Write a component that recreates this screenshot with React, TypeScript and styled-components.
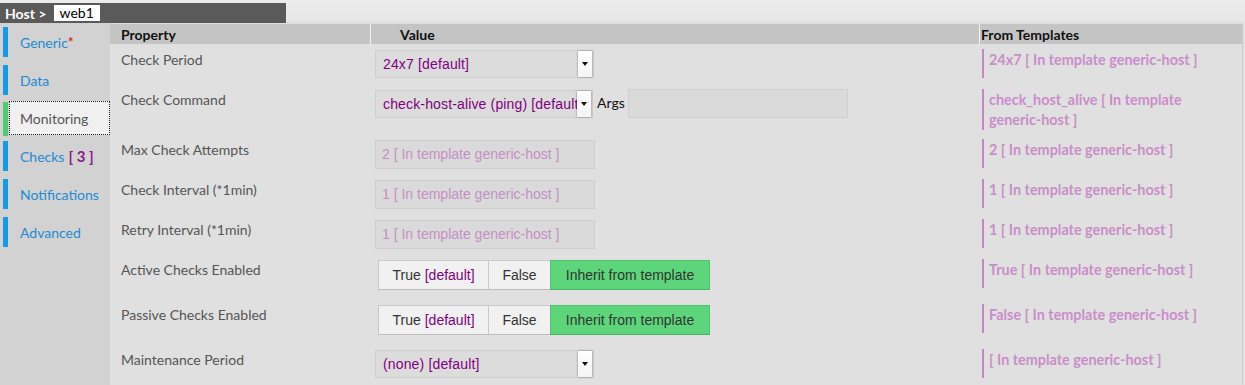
import React from "react";
import styled, { createGlobalStyle } from "styled-components";

const Global = createGlobalStyle`
  html, body { margin: 0; padding: 0; }
  *, *::before, *::after { box-sizing: border-box; }
  body {
    background: linear-gradient(#ececec 0px, #e6e6e6 24px, #e6e6e6 100%);
    font-family: Lato, "Liberation Sans", sans-serif;
    width: 1245px; height: 385px; overflow: hidden;
  }
`;

const Page = styled.div`
  display: flex;
  flex-direction: column;
  padding-top: 3px;
`;

const Crumb = styled.div`
  display: flex;
  align-items: center;
  width: 286px;
  height: 20px;
  background: #5a5a5a;
  padding-left: 5px;
  gap: 7px;
`;

const CrumbLabel = styled.span`
  color: #fff;
  font-weight: 700;
  font-size: 14px;
`;

const CrumbBox = styled.span`
  background: #fff;
  color: #000;
  font-size: 14px;
  height: 16px;
  line-height: 16px;
  padding: 0 6px;
  width: 46px;
`;

const Body = styled.div`
  display: flex;
  height: 362px;
`;

const Sidebar = styled.nav`
  width: 110px;
  background: #d2d2d2;
  display: flex;
  flex-direction: column;
  gap: 8px;
  padding-top: 4px;
`;

const Tab = styled.div<{ $active?: boolean }>`
  position: relative;
  height: 30px;
  margin-left: 3px;
  border-left: 5px solid #139be6;
  display: flex;
  align-items: center;
  font-size: 14px;
  color: #1f8bd3;
  padding-left: 12px;
  ${(p) =>
    p.$active &&
    `background:#f0f0f0; color:#555; outline:1px dotted #222; outline-offset:-1px; height:34px; margin-top:-2px; margin-bottom:-2px; padding-left:11px; border-left:none; margin-left:9px; &::before{content:"";position:absolute;left:-6px;top:1px;bottom:-1px;width:5px;background:#4fcc6b;}`}
`;

const Star = styled.sup`
  color: #e0201a;
  font-size: 13px;
  font-weight: 700;
  vertical-align: 4px;
  line-height: 0;
`;

const Count = styled.span`
  color: #8a1a8a;
  font-weight: 700;
  font-size: 15px;
  margin-left: 4px;
`;

const Main = styled.div`
  flex: 1;
  margin-right: 3px;
  background: #e0e0e0;
  box-shadow: 1px 0 2px rgba(0, 0, 0, 0.15);
  display: grid;
  grid-template-columns: 260px 609px 1fr;
  grid-auto-rows: min-content;
  align-content: start;
`;

const HeadCell = styled.div<{ $pad?: number; $line?: boolean }>`
  background: #c4c4c4;
  height: 20px;
  margin-top: 1px;
  line-height: 21px;
  font-weight: 700;
  font-size: 14px;
  color: #111;
  padding-left: ${(p) => p.$pad ?? 0}px;
  border-left: ${(p) => (p.$line ? "1px solid #f2f2f2" : "none")};
`;

const Label = styled.div<{ $h: number }>`
  height: ${(p) => p.$h}px;
  padding: 6px 0 0 11px;
  line-height: 20px;
  font-size: 14px;
  color: #555;
`;

const ValueCell = styled.div<{ $h: number }>`
  height: ${(p) => p.$h}px;
  padding: 6px 0 0 5px;
  display: flex;
  align-items: flex-start;
`;

const TplCell = styled.div<{ $h: number }>`
  height: ${(p) => p.$h}px;
  padding: 5px 0 0 3px;
`;

const Tpl = styled.div`
  border-left: 2px solid #c986c7;
  padding-left: 5px;
  min-height: 29px;
  line-height: 20px;
  padding-top: 1px;
  font-weight: 700;
  font-size: 14.4px;
  color: #c98ec9;
  max-width: 232px;
`;

const Select = styled.div<{ $w?: number }>`
  width: ${(p) => p.$w ?? 219}px;
  height: 28px;
  border: 1px solid #cfcfcf;
  background: #dcdcdc;
  display: flex;
  align-items: center;
  font-family: "Liberation Sans", Arial, sans-serif;
  font-size: 14px;
  color: #800080;
  padding-left: 7px;
`;

const SelText = styled.span`
  flex: 1;
  overflow: hidden;
  white-space: nowrap;
  letter-spacing: 0.15px;
`;

const Arrow = styled.span`
  flex: none;
  width: 14px;
  height: 26px;
  background: linear-gradient(#ffffff, #f4f4f4);
  box-shadow: 0 0 2px rgba(0, 0, 0, 0.45);
  display: flex;
  align-items: center;
  justify-content: center;
  margin-right: 1px;
  &::after {
    content: "";
    border-left: 3px solid transparent;
    border-right: 3px solid transparent;
    border-top: 4px solid #111;
  }
`;

const ArgsLabel = styled.span`
  font-size: 14px;
  color: #111;
  line-height: 26px;
  margin: 0 3px 0 4px;
`;

const Input = styled.div<{ $w: number; $mt?: number }>`
  width: ${(p) => p.$w}px;
  height: 29px;
  margin-top: ${(p) => p.$mt ?? 0}px;
  border: 1px solid #cfcfcf;
  background: #dadada;
  font-family: "Liberation Sans", Arial, sans-serif;
  font-size: 14px;
  color: #c48fc6;
  padding-left: 6px;
  line-height: 27px;
`;

const Group = styled.div`
  display: flex;
  margin-left: 4px;
  height: 30px;
`;

const Btn = styled.div<{ $w: number; $on?: boolean }>`
  width: ${(p) => p.$w}px;
  border: 1px solid ${(p) => (p.$on ? "#4ec26c" : "#c9c9c9")};
  border-bottom-color: ${(p) => (p.$on ? "#46b562" : "#bdbdbd")};
  margin-left: -1px;
  background: ${(p) => (p.$on ? "#5dd67b" : "#f1f1f1")};
  display: flex;
  align-items: center;
  justify-content: center;
  font-family: "Liberation Sans", Arial, sans-serif;
  font-size: 14px;
  color: #333;
`;

const Def = styled.span`
  color: #800080;
  margin-left: 4px;
`;

type Row = {
  label: string;
  h: number;
  value: React.ReactNode;
  tpl: string;
};

const Toggle = () => (
  <Group>
    <Btn $w={111}>
      True<Def>[default]</Def>
    </Btn>
    <Btn $w={63}>False</Btn>
    <Btn $w={160} $on>
      Inherit from template
    </Btn>
  </Group>
);

const Sel = ({ text, w }: { text: string; w?: number }) => (
  <Select $w={w}>
    <SelText>{text}</SelText>
    <Arrow />
  </Select>
);

const rows: Row[] = [
  { label: "Check Period", h: 40, value: <Sel text="24x7 [default]" />, tpl: "24x7 [ In template generic-host ]" },
  {
    label: "Check Command",
    h: 50,
    value: (
      <>
        <Sel text="check-host-alive (ping) [default]" w={218} />
        <ArgsLabel>Args</ArgsLabel>
        <Input $w={220} $mt={-1} />
      </>
    ),
    tpl: "check_host_alive [ In template generic-host ]",
  },
  { label: "Max Check Attempts", h: 40, value: <Input $w={220}>2 [ In template generic-host ]</Input>, tpl: "2 [ In template generic-host ]" },
  { label: "Check Interval (*1min)", h: 40, value: <Input $w={220}>1 [ In template generic-host ]</Input>, tpl: "1 [ In template generic-host ]" },
  { label: "Retry Interval (*1min)", h: 40, value: <Input $w={220}>1 [ In template generic-host ]</Input>, tpl: "1 [ In template generic-host ]" },
  { label: "Active Checks Enabled", h: 45, value: <Toggle />, tpl: "True [ In template generic-host ]" },
  { label: "Passive Checks Enabled", h: 45, value: <Toggle />, tpl: "False [ In template generic-host ]" },
  { label: "Maintenance Period", h: 42, value: <Sel text="(none) [default]" />, tpl: "[ In template generic-host ]" },
];

export default function App() {
  return (
    <Page>
      <Global />
      <Crumb>
        <CrumbLabel>Host &gt;</CrumbLabel>
        <CrumbBox>web1</CrumbBox>
      </Crumb>
      <Body>
        <Sidebar>
          <Tab>
            Generic<Star>*</Star>
          </Tab>
          <Tab>Data</Tab>
          <Tab $active>Monitoring</Tab>
          <Tab>
            Checks<Count>[ 3 ]</Count>
          </Tab>
          <Tab>Notifications</Tab>
          <Tab>Advanced</Tab>
        </Sidebar>
        <Main>
          <HeadCell $pad={11}>Property</HeadCell>
          <HeadCell $pad={29} $line>
            Value
          </HeadCell>
          <HeadCell $pad={1} $line>
            From Templates
          </HeadCell>
          {rows.map((r) => (
            <React.Fragment key={r.label}>
              <Label $h={r.h}>{r.label}</Label>
              <ValueCell $h={r.h}>{r.value}</ValueCell>
              <TplCell $h={r.h}>
                <Tpl>{r.tpl}</Tpl>
              </TplCell>
            </React.Fragment>
          ))}
        </Main>
      </Body>
    </Page>
  );
}
